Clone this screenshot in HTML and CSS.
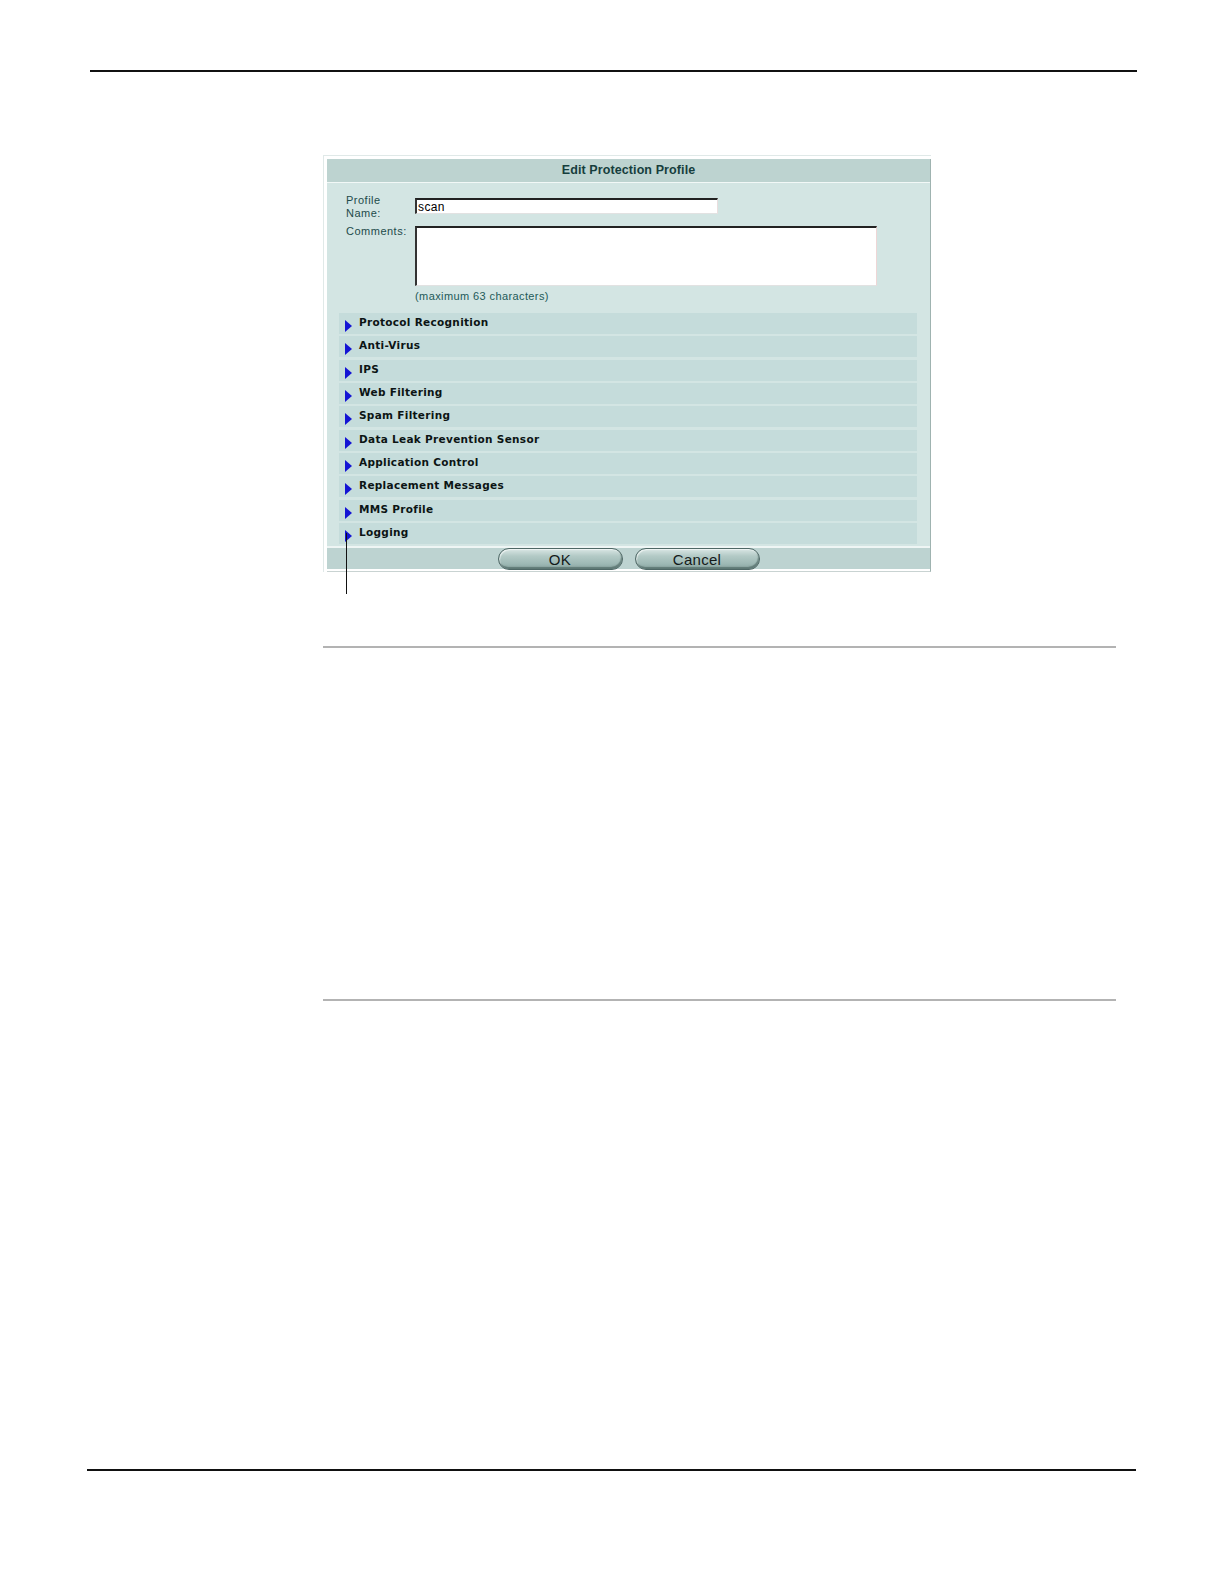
FILE: index.html
```
<!DOCTYPE html>
<html>
<head>
<meta charset="utf-8">
<title>Edit Protection Profile</title>
<link rel="stylesheet" href="styles.css">
</head>
<body>
<div class="page">
  <div class="rule-top"></div>
  <div class="figure">
    <div class="dialog">
      <div class="panel">
        <div class="titlebar">Edit Protection Profile</div>
        <div class="form">
          <label class="lbl">Profile<br>Name:</label>
          <div class="cell cell-name"><input class="name-input" type="text" value="scan"></div>
          <label class="lbl">Comments:</label>
          <div class="cell cell-comments">
            <textarea class="comments"></textarea>
            <div class="hint">(maximum 63 characters)</div>
          </div>
        </div>
        <div class="sections">
          <div class="section"><span class="arrow"></span><span class="sec-label">Protocol Recognition</span></div>
          <div class="section"><span class="arrow"></span><span class="sec-label">Anti-Virus</span></div>
          <div class="section"><span class="arrow"></span><span class="sec-label">IPS</span></div>
          <div class="section"><span class="arrow"></span><span class="sec-label">Web Filtering</span></div>
          <div class="section"><span class="arrow"></span><span class="sec-label">Spam Filtering</span></div>
          <div class="section"><span class="arrow"></span><span class="sec-label">Data Leak Prevention Sensor</span></div>
          <div class="section"><span class="arrow"></span><span class="sec-label">Application Control</span></div>
          <div class="section"><span class="arrow"></span><span class="sec-label">Replacement Messages</span></div>
          <div class="section"><span class="arrow"></span><span class="sec-label">MMS Profile</span></div>
          <div class="section"><span class="arrow"></span><span class="sec-label">Logging</span></div>
        </div>
        <div class="buttons">
          <button class="btn" type="button">OK</button>
          <button class="btn" type="button">Cancel</button>
        </div>
      </div>
    </div>
    <div class="callout"></div>
  </div>
  <div class="rule-grey rule-grey-1"></div>
  <div class="rule-grey rule-grey-2"></div>
  <div class="rule-bottom"></div>
</div>
</body>
</html>
```
FILE: styles.css
```
html, body {
  margin: 0;
  padding: 0;
  background: #ffffff;
}

.page {
  width: 1224px;
  height: 1584px;
  font-family: "Liberation Sans", Arial, sans-serif;
}

.rule-top {
  margin: 70px 0 0 90px;
  width: 1047px;
  height: 2px;
  background: #111111;
}

.figure {
  position: relative;
  margin: 83px 0 0 323px;
  width: 608px;
}

.dialog {
  border-left: 1px solid #e0e9e8;
  border-top: 1px solid #e0e9e8;
  padding: 3px 0 0 3px;
  background: #ffffff;
  width: 604px;
}

.panel {
  background: #d3e5e3;
  border-right: 1px solid #9fb3b0;
  border-bottom: 1px solid #c9d3d2;
  display: flex;
  flex-direction: column;
}

.titlebar {
  height: 23px;
  line-height: 23px;
  background: #bdd3d0;
  border-bottom: 1px solid #f2f8f7;
  text-align: center;
  font-weight: bold;
  font-size: 12.5px;
  color: #163e3d;
  letter-spacing: 0.1px;
}

.form {
  display: grid;
  grid-template-columns: 69px 462px;
  column-gap: 0;
  row-gap: 5px;
  padding: 11px 0 0 19px;
}

.lbl {
  font-size: 11px;
  line-height: 13px;
  color: #1d4b4a;
  letter-spacing: 0.5px;
}

.cell-name {
  padding-top: 4px;
}

.name-input {
  display: block;
  box-sizing: border-box;
  width: 303px;
  height: 16px;
  margin: 0;
  padding: 0 0 0 1px;
  background: #ffffff;
  border-style: solid;
  border-width: 2px 1px 1px 2px;
  border-color: #222222 #eadede #e2e2e2 #333333;
  font-family: "Liberation Sans", Arial, sans-serif;
  font-size: 12px;
  letter-spacing: 0.4px;
  color: #000000;
  outline: none;
}

.cell-comments {
  padding-top: 1px;
}

.comments {
  display: block;
  box-sizing: border-box;
  width: 462px;
  height: 60px;
  margin: 0;
  padding: 0;
  resize: none;
  overflow: hidden;
  background: #ffffff;
  border-style: solid;
  border-width: 2px 1px 1px 2px;
  border-color: #222222 #eed6d6 #e2e2e2 #333333;
  outline: none;
}

.hint {
  margin-top: 4px;
  font-size: 11px;
  line-height: 13px;
  color: #1e5a59;
  letter-spacing: 0.4px;
}

.sections {
  display: flex;
  flex-direction: column;
  gap: 2.33px;
  padding: 10px 13px 2px 12px;
}

.section {
  display: flex;
  align-items: flex-start;
  height: 21px;
  background: #c5dcdb;
}

.arrow {
  width: 0;
  height: 0;
  margin: 7px 0 0 6px;
  border-left: 7px solid #1414d4;
  border-top: 6px solid transparent;
  border-bottom: 6px solid transparent;
}

.sec-label {
  margin: 3px 0 0 7px;
  font-family: "DejaVu Sans", Verdana, sans-serif;
  font-weight: bold;
  font-size: 10.5px;
  line-height: 13px;
  letter-spacing: 0.3px;
  color: #0c1414;
}

.buttons {
  display: flex;
  justify-content: center;
  gap: 12px;
  height: 21px;
  background: #bdd3d1;
  border-top: 2px solid #eef5f4;
  border-bottom: 2px solid #ffffff;
}

.btn {
  box-sizing: border-box;
  width: 125px;
  height: 22px;
  margin: 0;
  padding: 2px 0 0 0;
  border: 1px solid #4f6866;
  border-radius: 11px;
  background: linear-gradient(#d9e6e4 0%, #b3cac6 35%, #9db8b4 75%, #86a29e 100%);
  box-shadow: inset -1px -2px 1px rgba(60, 85, 82, 0.55), inset 1px 1px 1px rgba(255, 255, 255, 0.6);
  font-family: "Liberation Sans", Arial, sans-serif;
  font-size: 15px;
  line-height: 18px;
  color: #141a1a;
  letter-spacing: 0.3px;
}

.callout {
  position: absolute;
  left: 23px;
  top: 378px;
  width: 1px;
  height: 61px;
  background: #111111;
}

.rule-grey {
  width: 793px;
  height: 2px;
  background: #b3b3b3;
  margin-left: 323px;
}

.rule-grey-1 {
  margin-top: 74px;
}

.rule-grey-2 {
  margin-top: 351px;
}

.rule-bottom {
  margin: 468px 0 0 87px;
  width: 1049px;
  height: 2px;
  background: #111111;
}
```
